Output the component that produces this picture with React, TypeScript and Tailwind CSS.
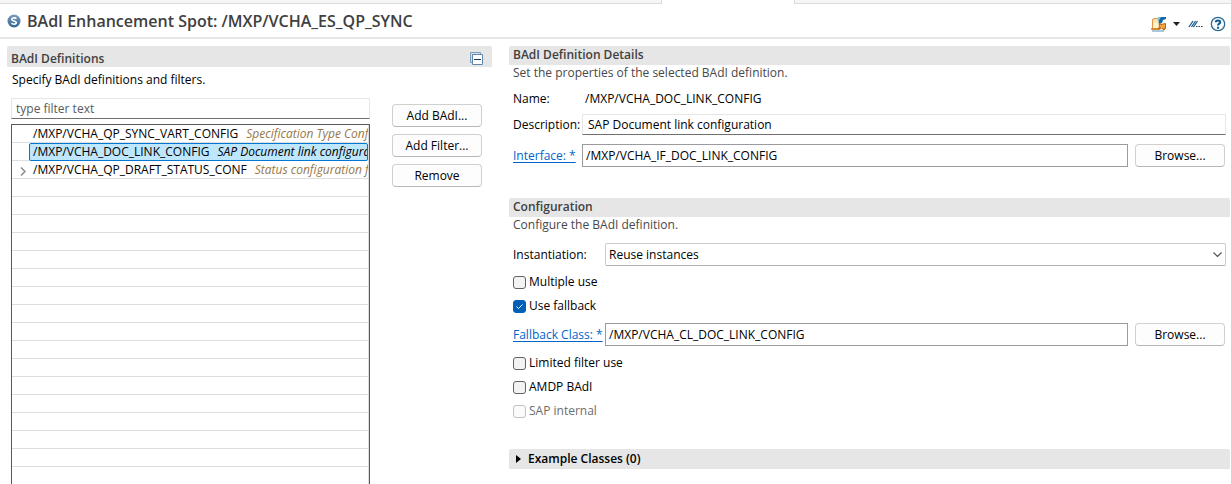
import type { ReactNode } from "react";

type Badi = {
  name: string;
  description: string;
  selected?: boolean;
  expandable?: boolean;
};

const badis: Badi[] = [
  {
    name: "/MXP/VCHA_QP_SYNC_VART_CONFIG",
    description: "Specification Type Conf",
  },
  {
    name: "/MXP/VCHA_DOC_LINK_CONFIG",
    description: "SAP Document link configuration",
    selected: true,
  },
  {
    name: "/MXP/VCHA_QP_DRAFT_STATUS_CONF",
    description: "Status configuration for",
    expandable: true,
  },
];

const emptyRows = Array.from({ length: 17 }, (_, i) => i);

function SpotIcon() {
  return (
    <svg width="14" height="14" viewBox="0 0 14 14" className="flex-none">
      <defs>
        <linearGradient id="spot" x1="0" y1="0" x2="0" y2="1">
          <stop offset="0" stopColor="#7d9dbd" />
          <stop offset="1" stopColor="#31648f" />
        </linearGradient>
      </defs>
      <circle cx="7" cy="7" r="6.5" fill="url(#spot)" />
      <path
        d="M9.4 4.7C8.4 3.6 4.8 3.4 4.8 5.400c0 1.800 4.500 1.200 4.500 3.200 0 2.100-3.800 1.900-4.900.7"
        fill="none"
        stroke="#fff"
        strokeWidth="1.6"
      />
    </svg>
  );
}

function FolderIcon() {
  return (
    <svg width="16" height="16" viewBox="0 0 16 16">
      <path d="M1.5 13V3.500h1v-1h4v1h3V13z" fill="#fbe6b0" stroke="#d99a4a" />
      <path d="M3 7h7v5H2z" fill="#fff3cf" />
      <path d="M0.500 12.500h8v1h-8z" fill="#f0b860" stroke="#d98a30" />
      <path d="M1 15h12" stroke="#5b8fb5" />
      <path d="M7 1h8v2l-3 1-1 3-3 1z" fill="#0f68a8" />
      <path d="M7 1l3 0-3 5z" fill="#8fc1e0" />
      <path
        d="M8 7.500l2 1 4.500-1v5l-1.500-.5.500 2-2-1-1.500-1.500-2.500 1.500 1-3z"
        fill="#f3a63c"
        stroke="#b5651d"
      />
    </svg>
  );
}

function LinkIcon() {
  return (
    <svg width="16" height="16" viewBox="0 0 16 16">
      <path
        d="M1 11l4-6M3.500 11l4-6M5.500 11l4-6"
        stroke="#1b5c8c"
        strokeWidth="1.300"
      />
      <path d="M8 10.500h1.500M10.500 10.500h1.500M13 10.500h1.500" stroke="#1b4468" />
    </svg>
  );
}

function HelpIcon() {
  return (
    <svg width="16" height="16" viewBox="0 0 16 16" fill="none">
      <circle
        cx="8"
        cy="8"
        r="6.700"
        fill="#f8fcff"
        stroke="#2a6a94"
        strokeWidth="1.300"
      />
      <path
        d="M5.800 6.300C5.800 3.800 10.200 3.900 10.200 6.200 10.200 7.700 8 7.600 8 9.600"
        stroke="#0f5a8c"
        strokeWidth="2"
      />
      <path d="M7 10.800h2v1.900H7z" fill="#0f5a8c" />
    </svg>
  );
}

function CollapseAllIcon() {
  return (
    <svg width="14" height="14" viewBox="0 0 14 14">
      <path d="M0.500 10.500v-10h10v2h-8v8z" fill="#cfe0ee" stroke="#7d9dbd" />
      <path d="M2.500 2.500h10v10h-10z" fill="#fff" stroke="#6387ab" />
      <path d="M4 7.500h7" stroke="#123a63" />
    </svg>
  );
}

function Heading({ children }: { children: ReactNode }) {
  return (
    <h2 className="h-[19px] rounded-t-xs bg-[#e6e6e6] px-1 text-xs leading-[18px] font-semibold text-[#404040]">
      {children}
    </h2>
  );
}

function PushButton({ children }: { children: ReactNode }) {
  return (
    <button
      type="button"
      className="h-[23px] w-[90px] flex-none rounded border border-[#d0d0d0] border-b-[#b8b8b8] bg-[#fdfdfd] leading-5"
    >
      {children}
    </button>
  );
}

function CheckBox({
  label,
  checked,
  disabled,
}: {
  label: string;
  checked?: boolean;
  disabled?: boolean;
}) {
  return (
    <label
      className={
        disabled
          ? "flex h-6 items-center gap-[3px] text-[#6d6d6d]"
          : "flex h-6 items-center gap-[3px]"
      }
    >
      <span className="grid">
        <input
          type="checkbox"
          defaultChecked={checked}
          disabled={disabled}
          className="peer col-start-1 row-start-1 size-[13px] appearance-none rounded-[3px] border border-[#626262] bg-[#f3f3f3] checked:border-[#005fb8] checked:bg-[#005fb8] disabled:border-[#c3c3c3] disabled:bg-[#fbfbfb]"
        />
        <svg
          viewBox="0 0 13 13"
          className="pointer-events-none invisible col-start-1 row-start-1 size-[13px] peer-checked:visible"
        >
          <path d="M3.500 6.500l2 2 4-4" fill="none" stroke="#fff" />
        </svg>
      </span>
      {label}
    </label>
  );
}

function BadiRow({ badi }: { badi: Badi }) {
  return (
    <li className="flex h-[18px] border-b border-[#dedede]">
      <span className="flex w-[17px] flex-none items-center justify-center">
        {badi.expandable && (
          <svg width="6" height="9" viewBox="0 0 6 9" className="mt-1 -mr-1">
            <path
              d="M1 0.500l4 4-4 4"
              fill="none"
              stroke="#8b8b8b"
              strokeWidth="1.500"
            />
          </svg>
        )}
      </span>
      <span
        className={
          badi.selected
            ? "-mb-px min-w-0 flex-1 overflow-hidden rounded-xs border border-[#0078d4] bg-[#bee6fd] pl-[3px] leading-4 whitespace-nowrap"
            : "min-w-0 flex-1 overflow-hidden pl-1 leading-[18px] whitespace-nowrap"
        }
      >
        {badi.name}
        <em className={badi.selected ? "ml-2" : "ml-2 text-[#967848]"}>
          {badi.description}
        </em>
      </span>
    </li>
  );
}

export default function App() {
  return (
    <div className="flex h-screen flex-col overflow-hidden bg-white font-['Open_Sans','Noto_Sans',sans-serif] text-xs text-black">
      <div className="flex h-1 flex-none">
        <div className="w-[662px] border-r border-b border-[#dcdcdc] bg-[#f5f5f5]" />
        <div className="w-[132px]" />
        <div className="flex-1 border-b border-l border-[#dcdcdc] bg-[#f5f5f5]" />
      </div>

      <header className="flex h-[35px] flex-none items-center border-b-2 border-[#e6e6e6] pr-[5px] pl-[7px]">
        <SpotIcon />
        <h1 className="ml-1.5 flex-1 text-base leading-6 font-semibold text-[#404040]">
          BAdI Enhancement Spot: /MXP/VCHA_ES_QP_SYNC
        </h1>
        <div className="flex items-center pt-1.5">
          <button type="button" aria-label="Open in project">
            <FolderIcon />
          </button>
          <button type="button" aria-label="More" className="ml-1.5">
            <svg width="7" height="4" viewBox="0 0 7 4" className="block">
              <path d="M0 0h7L3.500 4z" fill="#222" />
            </svg>
          </button>
          <button type="button" aria-label="Link" className="ml-2">
            <LinkIcon />
          </button>
          <button type="button" aria-label="Help" className="ml-1.5">
            <HelpIcon />
          </button>
        </div>
      </header>

      <main className="flex min-h-0 flex-1 gap-[17px] pt-[7px] pl-[7px]">
        <section className="flex w-[485px] flex-none flex-col">
          <div className="flex h-[21px] flex-none items-center justify-between rounded-t-xs bg-[#e6e6e6] pt-1 pr-2 pl-1">
            <h2 className="font-semibold text-[#404040]">BAdI Definitions</h2>
            <button type="button" aria-label="Collapse all">
              <CollapseAllIcon />
            </button>
          </div>
          <p className="mt-[3px] pl-[5px] leading-5">
            Specify BAdI definitions and filters.
          </p>
          <div className="mt-2 flex min-h-0 flex-1 gap-[22px] pl-1">
            <div className="flex w-[359px] flex-none flex-col gap-[5px]">
              <input
                type="text"
                aria-label="Filter"
                placeholder="type filter text"
                className="h-[21px] w-full flex-none border border-[#e6e6e6] border-b-[#707070] px-1 placeholder:text-[#5a5a5a] placeholder:opacity-100"
              />
              <div className="flex min-h-0 flex-1 overflow-hidden border border-b-0 border-[#5a5a5a]">
                <ul className="min-w-0 flex-1 border-r border-[#dedede]">
                  {badis.map((badi) => (
                    <BadiRow key={badi.name} badi={badi} />
                  ))}
                  {emptyRows.map((i) => (
                    <li
                      key={i}
                      className="h-[18px] border-b border-[#dedede]"
                    />
                  ))}
                </ul>
              </div>
            </div>
            <div className="flex flex-col gap-[7px] pt-1.5">
              <PushButton>Add BAdI...</PushButton>
              <PushButton>Add Filter...</PushButton>
              <PushButton>Remove</PushButton>
            </div>
          </div>
        </section>

        <div className="min-w-0 flex-1 pr-px">
          <section>
            <Heading>BAdI Definition Details</Heading>
            <p className="pl-1 leading-4 text-[#484848]">
              Set the properties of the selected BAdI definition.
            </p>
            <div className="mt-2 pr-1 pl-1">
              <dl className="flex h-5 items-center">
                <dt className="w-[72px]">Name:</dt>
                <dd>/MXP/VCHA_DOC_LINK_CONFIG</dd>
              </dl>
              <div className="mt-[5px] flex items-center">
                <label htmlFor="description" className="w-[69px] flex-none">
                  Description:
                </label>
                <input
                  id="description"
                  type="text"
                  defaultValue="SAP Document link configuration"
                  className="h-[21px] min-w-0 flex-1 border border-[#e6e6e6] border-b-[#707070] px-[5px]"
                />
              </div>
              <div className="mt-[9px] flex items-center">
                <a
                  href="#interface"
                  id="interface-label"
                  className="mr-auto text-[#0066cc] underline underline-offset-2"
                >
                  Interface: *
                </a>
                <div className="flex w-[calc(100%-69px)] gap-[7px] pr-px">
                  <input
                    type="text"
                    aria-labelledby="interface-label"
                    defaultValue="/MXP/VCHA_IF_DOC_LINK_CONFIG"
                    className="h-[23px] min-w-0 flex-1 border border-[#9a9a9f] px-[3px]"
                  />
                  <PushButton>Browse...</PushButton>
                </div>
              </div>
            </div>
          </section>

          <section className="mt-[31px]">
            <Heading>Configuration</Heading>
            <p className="pl-1 leading-4 text-[#484848]">
              Configure the BAdI definition.
            </p>
            <div className="mt-2.5 pr-1 pl-1">
              <div className="flex items-center">
                <label htmlFor="instantiation" className="w-[92px] flex-none">
                  Instantiation:
                </label>
                <div className="grid min-w-0 flex-1 items-center">
                  <select
                    id="instantiation"
                    className="col-start-1 row-start-1 h-[23px] w-full appearance-none rounded-xs border border-[#cccccc] border-b-[#b0b0b0] bg-white px-[3px]"
                  >
                    <option>Reuse instances</option>
                  </select>
                  <svg
                    width="9"
                    height="5"
                    viewBox="0 0 9 5"
                    className="pointer-events-none col-start-1 row-start-1 mr-1 justify-self-end"
                  >
                    <path
                      d="M0.500 0.500l4 4 4-4"
                      fill="none"
                      stroke="#555"
                      strokeWidth="1.200"
                    />
                  </svg>
                </div>
              </div>
              <div className="mt-1">
                <CheckBox label="Multiple use" />
                <CheckBox label="Use fallback" checked />
              </div>
              <div className="mt-[5px] flex items-center">
                <a
                  href="#fallback-class"
                  id="fallback-label"
                  className="mr-auto text-[#0066cc] underline underline-offset-2"
                >
                  Fallback Class: *
                </a>
                <div className="flex w-[calc(100%-92px)] gap-[7px] pr-px">
                  <input
                    type="text"
                    aria-labelledby="fallback-label"
                    defaultValue="/MXP/VCHA_CL_DOC_LINK_CONFIG"
                    className="h-[23px] min-w-0 flex-1 border border-[#9a9a9f] px-[3px]"
                  />
                  <PushButton>Browse...</PushButton>
                </div>
              </div>
              <div className="mt-[5px]">
                <CheckBox label="Limited filter use" />
                <CheckBox label="AMDP BAdI" />
                <CheckBox label="SAP internal" disabled />
              </div>
            </div>
          </section>

          <section className="mt-[26px]">
            <button
              type="button"
              className="flex h-5 w-full items-center gap-[7px] rounded-t-xs bg-[#e6e6e6] pl-[7px] font-semibold"
            >
              <svg width="5" height="8" viewBox="0 0 5 8">
                <path d="M0 0l5 4-5 4z" fill="#000" />
              </svg>
              Example Classes (0)
            </button>
          </section>
        </div>
      </main>
    </div>
  );
}
